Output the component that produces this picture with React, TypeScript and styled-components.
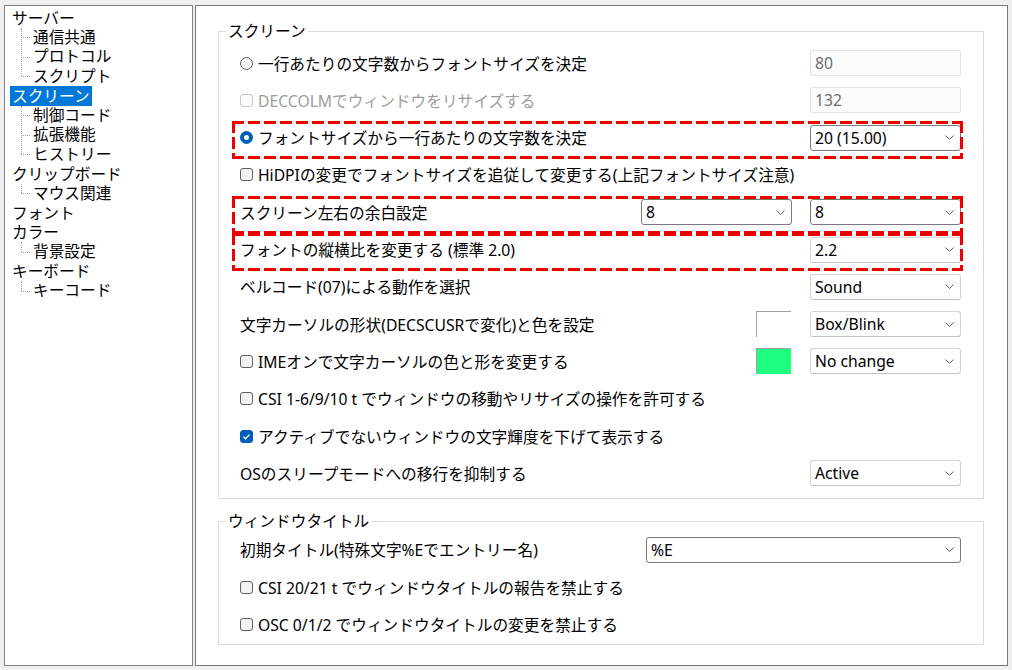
import React from "react";
import styled, { createGlobalStyle } from "styled-components";

const GlobalStyle = createGlobalStyle`
    html, body {
        margin: 0;
        padding: 0;
        background: #f0f0f0;
    }
    body {
        font-family: "Noto Sans", "Noto Sans CJK JP", sans-serif;
        font-size: 15.7px;
        color: #000;
    }
`;

const ROW_H = 37.3;
const TREE_ROW = 19.5;

const Page = styled.div`
    display: flex;
    gap: 2px;
    padding: 5px 4px 0 4px;
    width: 1012px;
    height: 670px;
    box-sizing: border-box;
`;

/* ---------- tree ---------- */

const TreePanel = styled.div`
    width: 189px;
    height: 661px;
    box-sizing: border-box;
    background: #fff;
    border: 1px solid #828282;
    padding-top: 2px;
`;

const TreeList = styled.ul`
    list-style: none;
    margin: 0;
    padding: 0;
    line-height: ${TREE_ROW}px;
`;

const TreeRow = styled.div`
    height: ${TREE_ROW}px;
    display: flex;
    align-items: center;
`;

const ChildList = styled.ul`
    list-style: none;
    margin: 0;
    padding: 0;
    position: relative;
    &::before {
        content: "";
        position: absolute;
        left: 16px;
        top: 0;
        bottom: ${TREE_ROW / 2}px;
        border-left: 1px dotted #a0a0a0;
    }
`;

const TreeLabel = styled.span<{ $selected?: boolean }>`
    height: 20px;
    line-height: 20px;
    padding: 0 2px;
    margin-left: 5px;
    white-space: nowrap;
    background: ${({ $selected }) => ($selected ? "#0078d7" : "transparent")};
    color: ${({ $selected }) => ($selected ? "#fff" : "#000")};
`;

const ChildItem = styled.li`
    position: relative;
    height: ${TREE_ROW}px;
    line-height: ${TREE_ROW}px;
    padding-left: 28px;
    white-space: nowrap;
    &::before {
        content: "";
        position: absolute;
        left: 16px;
        width: 9px;
        top: 50%;
        border-top: 1px dotted #a0a0a0;
    }
`;

type TreeNode = { label: string; selected?: boolean; children?: string[] };

const tree: TreeNode[] = [
    { label: "サーバー", children: ["通信共通", "プロトコル", "スクリプト"] },
    { label: "スクリーン", selected: true, children: ["制御コード", "拡張機能", "ヒストリー"] },
    { label: "クリップボード", children: ["マウス関連"] },
    { label: "フォント" },
    { label: "カラー", children: ["背景設定"] },
    { label: "キーボード", children: ["キーコード"] },
];

/* ---------- settings ---------- */

const SettingsPanel = styled.div`
    flex: 1;
    height: 661px;
    box-sizing: border-box;
    background: #fff;
    border: 1px solid #7a7a7a;
    padding: 15px 23px 0 22px;
`;

const GroupBox = styled.fieldset<{ $gapTop?: number }>`
    margin: ${({ $gapTop }) => $gapTop ?? 0}px 0 0 0;
    padding: 0 7px;
    border: 1px solid #dcdcdc;
    min-width: 0;
`;

const GroupTitle = styled.legend`
    padding: 0 2px;
    line-height: 20px;
    height: 20px;
`;

const GroupBody = styled.div<{ $pt: number; $pb: number }>`
    padding: ${({ $pt }) => $pt}px 15px ${({ $pb }) => $pb}px 14px;
`;

const Row = styled.div<{ $marked?: boolean }>`
    position: relative;
    display: flex;
    align-items: center;
    height: ${ROW_H}px;
    ${({ $marked }) =>
        $marked &&
        `
        &::after {
            content: "";
            position: absolute;
            left: -8px;
            right: -2px;
            top: 2px;
            bottom: -3px;
            pointer-events: none;
            background:
                repeating-linear-gradient(to right, #ee0000 0 12px, transparent 12px 16px) left top / 100% 3px no-repeat,
                repeating-linear-gradient(to right, #ee0000 0 12px, transparent 12px 16px) left bottom / 100% 3px no-repeat,
                repeating-linear-gradient(to bottom, #ee0000 0 12px, transparent 12px 16px) left top / 3px 100% no-repeat,
                repeating-linear-gradient(to bottom, #ee0000 0 12px, transparent 12px 16px) right top / 3px 100% no-repeat;
        }
    `}
`;

const Label = styled.div<{ $disabled?: boolean }>`
    flex: 1;
    display: flex;
    align-items: center;
    gap: 5px;
    white-space: nowrap;
    color: ${({ $disabled }) => ($disabled ? "#9d9d9d" : "#000")};
`;

const Controls = styled.div`
    display: flex;
    align-items: center;
    gap: 18px;
`;

const CheckBox = styled.span<{ $checked?: boolean; $disabled?: boolean }>`
    display: inline-flex;
    align-items: center;
    justify-content: center;
    width: 13px;
    height: 13px;
    box-sizing: border-box;
    border-radius: 3px;
    flex: none;
    border: 1px solid
        ${({ $checked, $disabled }) => ($checked ? "#005fb8" : $disabled ? "#c8c8c8" : "#5f5f5f")};
    background: ${({ $checked, $disabled }) => ($checked ? "#005fb8" : $disabled ? "#fbfbfb" : "#f3f3f3")};
`;

const RadioDot = styled.span<{ $checked?: boolean }>`
    display: inline-flex;
    align-items: center;
    justify-content: center;
    width: 13px;
    height: 13px;
    box-sizing: border-box;
    border-radius: 50%;
    flex: none;
    border: 1px solid ${({ $checked }) => ($checked ? "#005fb8" : "#5f5f5f")};
    background: ${({ $checked }) => ($checked ? "#005fb8" : "#f3f3f3")};
    &::after {
        content: "";
        display: ${({ $checked }) => ($checked ? "block" : "none")};
        width: 5px;
        height: 5px;
        border-radius: 50%;
        background: #fff;
    }
`;

const Field = styled.div<{ $width?: number }>`
    width: ${({ $width }) => $width ?? 151}px;
    height: 26px;
    box-sizing: border-box;
    border: 1px solid #e3e3e3;
    border-radius: 2px;
    background: #fcfcfc;
    color: #6e6e6e;
    padding-left: 4px;
    display: flex;
    align-items: center;
`;

const SelectBox = styled.div<{ $width?: number; $dark?: boolean }>`
    width: ${({ $width }) => $width ?? 151}px;
    height: 26px;
    box-sizing: border-box;
    border: 1px solid ${({ $dark }) => ($dark ? "#7a7a7a" : "#d4d4d4")};
    border-bottom-color: ${({ $dark }) => ($dark ? "#7a7a7a" : "#c2c2c2")};
    border-radius: 3px;
    background: #fefefe;
    padding: 0 6px 0 4px;
    display: flex;
    align-items: center;
    justify-content: space-between;
    white-space: nowrap;
`;

const Swatch = styled.div<{ $color: string }>`
    width: 35px;
    height: 26px;
    box-sizing: border-box;
    border-top: 1px solid #a0a0a0;
    border-left: 1px solid #a0a0a0;
    background: ${({ $color }) => $color};
    margin-right: 1px;
`;

const Chevron = () => (
    <svg width="9" height="5" viewBox="0 0 9 5">
        <polyline points="0.5,0.5 4.5,4.5 8.5,0.5" fill="none" stroke="#606060" strokeWidth="1" />
    </svg>
);

const CheckMark = () => (
    <svg width="11" height="11" viewBox="0 0 11 11">
        <polyline points="2.5,5.8 4.5,7.8 8.5,3.6" fill="none" stroke="#fff" strokeWidth="1.3" />
    </svg>
);

const Check = ({ checked, disabled }: { checked?: boolean; disabled?: boolean }) => (
    <CheckBox $checked={checked} $disabled={disabled}>
        {checked && <CheckMark />}
    </CheckBox>
);

const Select = ({ value, width, dark }: { value: string; width?: number; dark?: boolean }) => (
    <SelectBox $width={width} $dark={dark}>
        <span>{value}</span>
        <Chevron />
    </SelectBox>
);

export default function App() {
    return (
        <>
            <GlobalStyle />
            <Page>
                <TreePanel>
                    <TreeList>
                        {tree.map((node) => (
                            <li key={node.label}>
                                <TreeRow>
                                    <TreeLabel $selected={node.selected}>{node.label}</TreeLabel>
                                </TreeRow>
                                {node.children && (
                                    <ChildList>
                                        {node.children.map((c) => (
                                            <ChildItem key={c}>{c}</ChildItem>
                                        ))}
                                    </ChildList>
                                )}
                            </li>
                        ))}
                    </TreeList>
                </TreePanel>

                <SettingsPanel>
                    <GroupBox>
                        <GroupTitle>スクリーン</GroupTitle>
                        <GroupBody $pt={3.4} $pb={6.4}>
                            <Row>
                                <Label>
                                    <RadioDot />
                                    一行あたりの文字数からフォントサイズを決定
                                </Label>
                                <Field>80</Field>
                            </Row>
                            <Row>
                                <Label $disabled>
                                    <Check disabled />
                                    DECCOLMでウィンドウをリサイズする
                                </Label>
                                <Field>132</Field>
                            </Row>
                            <Row $marked>
                                <Label>
                                    <RadioDot $checked />
                                    フォントサイズから一行あたりの文字数を決定
                                </Label>
                                <Select value="20 (15.00)" dark />
                            </Row>
                            <Row>
                                <Label>
                                    <Check />
                                    HiDPIの変更でフォントサイズを追従して変更する(上記フォントサイズ注意)
                                </Label>
                            </Row>
                            <Row $marked>
                                <Label>スクリーン左右の余白設定</Label>
                                <Controls>
                                    <Select value="8" dark />
                                    <Select value="8" dark />
                                </Controls>
                            </Row>
                            <Row $marked>
                                <Label>フォントの縦横比を変更する (標準 2.0)</Label>
                                <Select value="2.2" />
                            </Row>
                            <Row>
                                <Label>ベルコード(07)による動作を選択</Label>
                                <Select value="Sound" />
                            </Row>
                            <Row>
                                <Label>文字カーソルの形状(DECSCUSRで変化)と色を設定</Label>
                                <Controls>
                                    <Swatch $color="#ffffff" />
                                    <Select value="Box/Blink" />
                                </Controls>
                            </Row>
                            <Row>
                                <Label>
                                    <Check />
                                    IMEオンで文字カーソルの色と形を変更する
                                </Label>
                                <Controls>
                                    <Swatch $color="#1eff80" />
                                    <Select value="No change" />
                                </Controls>
                            </Row>
                            <Row>
                                <Label>
                                    <Check />
                                    CSI 1-6/9/10 t でウィンドウの移動やリサイズの操作を許可する
                                </Label>
                            </Row>
                            <Row>
                                <Label>
                                    <Check checked />
                                    アクティブでないウィンドウの文字輝度を下げて表示する
                                </Label>
                            </Row>
                            <Row>
                                <Label>OSのスリープモードへの移行を抑制する</Label>
                                <Select value="Active" />
                            </Row>
                        </GroupBody>
                    </GroupBox>

                    <GroupBox $gapTop={12}>
                        <GroupTitle>ウィンドウタイトル</GroupTitle>
                        <GroupBody $pt={0} $pb={1}>
                            <Row>
                                <Label>初期タイトル(特殊文字%Eでエントリー名)</Label>
                                <Select value="%E" width={315} dark />
                            </Row>
                            <Row>
                                <Label>
                                    <Check />
                                    CSI 20/21 t でウィンドウタイトルの報告を禁止する
                                </Label>
                            </Row>
                            <Row>
                                <Label>
                                    <Check />
                                    OSC 0/1/2 でウィンドウタイトルの変更を禁止する
                                </Label>
                            </Row>
                        </GroupBody>
                    </GroupBox>
                </SettingsPanel>
            </Page>
        </>
    );
}
